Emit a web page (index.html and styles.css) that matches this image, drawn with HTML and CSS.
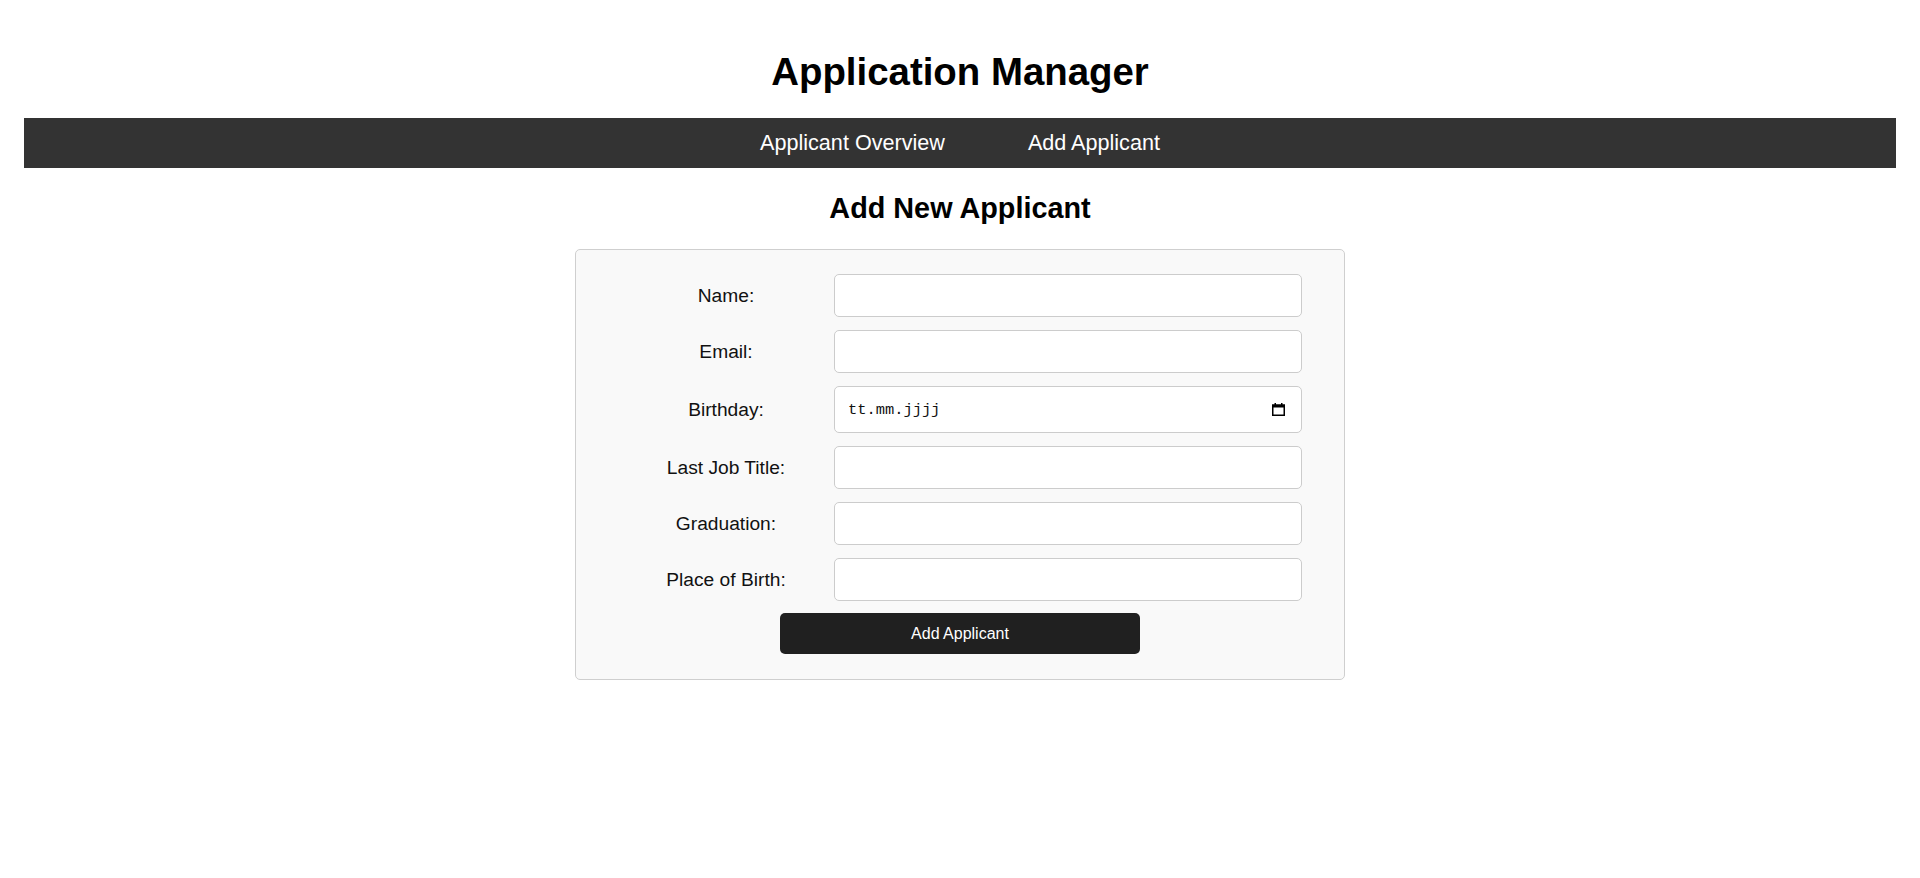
FILE: index.html
```html
<!DOCTYPE html>
<html lang="de">
<head>
<meta charset="utf-8">
<title>Application Manager</title>
<link rel="stylesheet" href="styles.css">
</head>
<body>
  <header class="header">
    <h1 class="title">Application Manager</h1>
  </header>
  <nav class="nav">
    <a class="nav-link" href="#">Applicant Overview</a>
    <a class="nav-link" href="#">Add Applicant</a>
  </nav>
  <main class="main">
    <h2 class="subtitle">Add New Applicant</h2>
    <form class="form-box">
      <label class="form-label" for="name">Name:</label>
      <input class="form-input" id="name" type="text">

      <label class="form-label" for="email">Email:</label>
      <input class="form-input" id="email" type="text">

      <label class="form-label" for="birthday">Birthday:</label>
      <div class="date-wrap">
        <input class="form-input date-input" id="birthday" type="text" placeholder="tt.mm.jjjj">
        <svg class="cal-icon" width="13" height="13" viewBox="0 0 13 13" aria-hidden="true">
          <rect x="0.75" y="2.25" width="11.5" height="10" fill="none" stroke="#000" stroke-width="1.5"/>
          <rect x="0" y="1.5" width="13" height="3" fill="#000"/>
          <rect x="2.5" y="0" width="1.5" height="2" fill="#000"/>
          <rect x="9" y="0" width="1.5" height="2" fill="#000"/>
        </svg>
      </div>

      <label class="form-label" for="job">Last Job Title:</label>
      <input class="form-input" id="job" type="text">

      <label class="form-label" for="grad">Graduation:</label>
      <input class="form-input" id="grad" type="text">

      <label class="form-label" for="pob">Place of Birth:</label>
      <input class="form-input" id="pob" type="text">

      <button class="submit-btn" type="button">Add Applicant</button>
    </form>
  </main>
</body>
</html>
```
FILE: styles.css
```css
* {
  box-sizing: border-box;
}

html, body {
  margin: 0;
  padding: 0;
  background: #ffffff;
}

body {
  font-family: "Liberation Sans", Arial, sans-serif;
  color: #000;
  padding: 0 24px;
}

.header {
  padding-top: 50px;
  padding-bottom: 24px;
}

.title {
  margin: 0;
  font-size: 38.4px;
  line-height: 44px;
  font-weight: bold;
  text-align: center;
  color: #000;
}

.nav {
  height: 50px;
  background: #333333;
  display: flex;
  justify-content: center;
  align-items: center;
  gap: 83px;
}

.nav-link {
  color: #ffffff;
  text-decoration: none;
  font-size: 21.6px;
}

.main {
  padding-bottom: 40px;
}

.subtitle {
  margin: 24px 0;
  font-size: 28.8px;
  line-height: 33px;
  font-weight: bold;
  text-align: center;
}

.form-box {
  width: 770px;
  margin: 0 auto;
  padding: 24px 24px 25px;
  background: #f9f9f9;
  border: 1px solid #cfcfcf;
  border-radius: 5px;
  display: grid;
  grid-template-columns: 216px 468px;
  justify-content: center;
  align-items: center;
  row-gap: 13px;
}

.form-label {
  text-align: center;
  font-size: 19.2px;
  color: #111;
}

.form-input {
  display: block;
  width: 468px;
  height: 43px;
  padding: 0 10px;
  font-family: "Liberation Sans", Arial, sans-serif;
  font-size: 19.2px;
  background: #ffffff;
  border: 1px solid #cccccc;
  border-radius: 5px;
  outline: none;
}

.date-wrap {
  position: relative;
  width: 468px;
}

.date-input {
  height: 47px;
  padding-left: 13px;
  font-family: "Liberation Mono", "DejaVu Sans Mono", monospace;
  font-size: 15.4px;
}

.date-input::placeholder {
  color: #111;
  opacity: 1;
}

.cal-icon {
  position: absolute;
  right: 17px;
  top: 17px;
}

.submit-btn {
  grid-column: 1 / -1;
  justify-self: center;
  width: 360px;
  height: 41px;
  margin-top: -1px;
  background: #202020;
  color: #ffffff;
  border: none;
  border-radius: 5px;
  font-family: "Liberation Sans", Arial, sans-serif;
  font-size: 16px;
  cursor: pointer;
}
```
